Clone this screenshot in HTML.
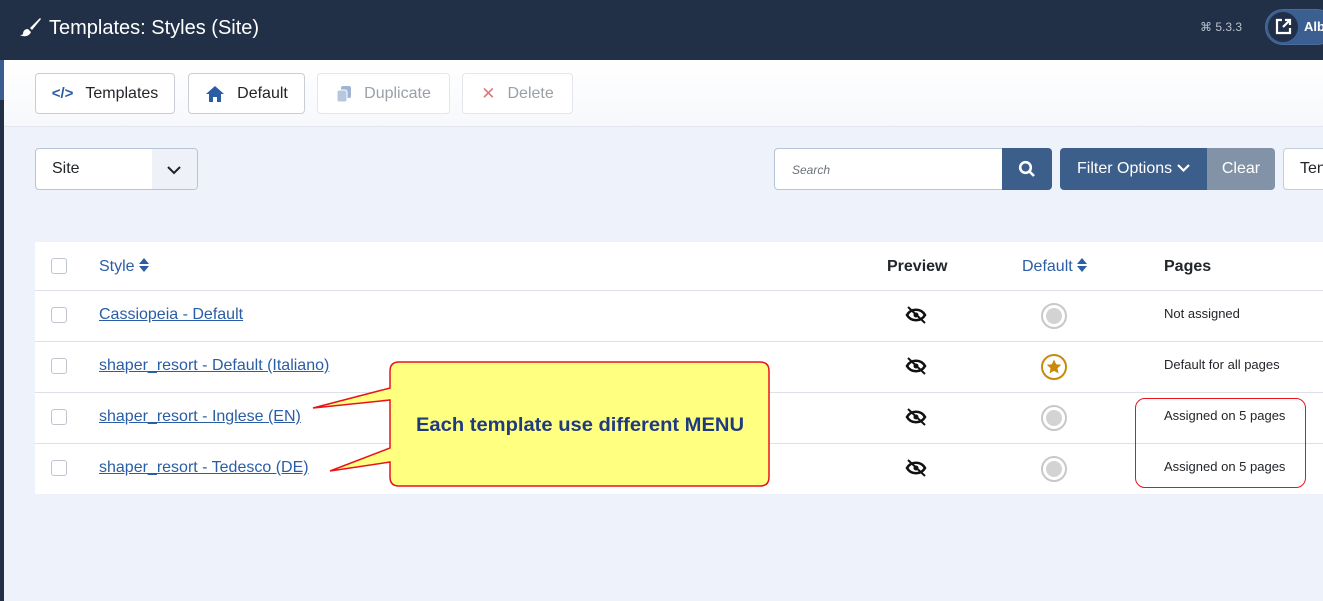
<!DOCTYPE html>
<html><head><meta charset="utf-8"><style>
*{box-sizing:border-box;margin:0;padding:0}
body{width:1323px;height:601px;overflow:hidden;background:#eef2fa;font-family:"Liberation Sans",sans-serif;position:relative;color:#22262a}
.abs{position:absolute}
.hdr{left:0;top:0;width:1323px;height:60px;background:#212f47}
.tb{left:0;top:60px;width:1323px;height:67px;background:linear-gradient(#fff,#f6f8fb);border-bottom:1px solid #e2e7f0}
.btn{position:absolute;top:73px;height:41px;border:1px solid #c9ced6;border-radius:4px;background:#fff;font-size:16px;display:flex;align-items:center;justify-content:center;gap:12px}
.btn.dis{border-color:#e3e6ea;color:#9aa0a8}
.row{position:absolute;left:35px;width:1288px;border-top:1px solid #dde1e7}
.cb{position:absolute;left:51px;width:16px;height:16px;border:1px solid #bfc5cd;border-radius:3px;background:#fff}
.lnk{position:absolute;left:99px;color:#2a5da6;text-decoration:underline;font-size:16px}
.pg{position:absolute;left:1164px;font-size:13px;color:#22262a}
.rad{position:absolute;left:1041px;width:26px;height:26px;border-radius:50%;border:2px solid #c8c8c8;background:#fff}
.rad::after{content:"";position:absolute;left:3px;top:3px;width:16px;height:16px;border-radius:50%;background:#d3d3d3}
.eye{position:absolute;left:905px}
.sort{display:inline-block;vertical-align:-1px}
</style></head><body>
<div class="abs hdr"></div>
<div class="abs tb"></div>
<div class="abs" style="left:0;top:60px;width:4px;height:541px;background:#212f47"></div>
<div class="abs" style="left:0;top:60px;width:4px;height:40px;background:#3a5c8f"></div>
<svg class="abs" style="left:18px;top:17px" width="24" height="20" viewBox="0 0 24 20"><path d="M22 1 L12 11 L14 13 L23 2 Z" fill="#fff"/><path d="M10 12 C6 12 5 15 5 17 C4 18 3 18 2 18 C5 20 11 20 13 15 Z" fill="#fff"/></svg>
<div class="abs" style="left:49px;top:17px;color:#fff;font-size:20px">Templates: Styles (Site)</div>
<div class="abs" style="left:1200px;top:20px;color:#b8c0cc;font-size:12px">⌘ 5.3.3</div>
<div class="abs" style="left:1265px;top:9px;width:70px;height:36px;border-radius:18px;background:#3b5f90;border:1px solid #4a6c9c"></div>
<div class="abs" style="left:1268px;top:12px;width:30px;height:30px;border-radius:50%;background:#212f47"></div>
<svg class="abs" style="left:1274px;top:18px" width="18" height="18" viewBox="0 0 18 18" fill="none" stroke="#fff" stroke-width="2.2"><path d="M8 2H3v13h13v-5"/><path d="M9 9 16 2M11 2h5v5"/></svg>
<div class="abs" style="left:1304px;top:19px;color:#fff;font-size:13px;font-weight:bold">Alb</div>

<div class="btn" style="left:35px;width:140px"><span style="color:#2a5da6;font-weight:bold;font-size:15px">&lt;/&gt;</span>Templates</div>
<div class="btn" style="left:188px;width:117px"><svg width="20" height="18" viewBox="0 0 20 18"><path d="M10 1 L1 9 H4 V17 H8 V12 H12 V17 H16 V9 H19 Z" fill="#2a5da6"/></svg>Default</div>
<div class="btn dis" style="left:317px;width:133px"><svg width="16" height="18" viewBox="0 0 16 18"><rect x="5" y="1" width="10" height="12" rx="2" fill="#9fb3d3"/><rect x="1" y="5" width="10" height="12" rx="2" fill="#b7c7e0" stroke="#fff"/></svg>Duplicate</div>
<div class="btn dis" style="left:462px;width:111px"><span style="color:#e07a7a;font-size:17px">✕</span>Delete</div>

<div class="abs" style="left:35px;top:148px;width:163px;height:42px;border:1px solid #b7c4d6;border-radius:4px;background:#fff;overflow:hidden">
<div class="abs" style="left:116px;top:0;width:47px;height:42px;background:#eef2f8"></div>
<div class="abs" style="left:16px;top:11px;font-size:16px">Site</div>
<svg class="abs" style="left:130px;top:15px" width="16" height="12" viewBox="0 0 16 12"><path d="M2 3l6 6 6-6" fill="none" stroke="#222" stroke-width="2"/></svg>
</div>
<div class="abs" style="left:774px;top:148px;width:230px;height:42px;border:1px solid #b7c4d6;border-radius:4px 0 0 4px;background:#fff"><span style="position:absolute;left:17px;top:14px;font-size:12px;font-style:italic;color:#6b7178">Search</span></div>
<div class="abs" style="left:1002px;top:148px;width:50px;height:42px;background:#3c5e8b;border-radius:0 4px 4px 0"></div>
<svg class="abs" style="left:1018px;top:160px" width="18" height="18" viewBox="0 0 18 18" fill="none" stroke="#fff" stroke-width="2.6"><circle cx="7.5" cy="7.5" r="5.3"/><path d="M11.5 11.5 16 16"/></svg>
<div class="abs" style="left:1060px;top:148px;width:148px;height:42px;background:#3c5e8b;border-radius:4px 0 0 4px;color:#fff;font-size:16px;line-height:42px;padding-left:17px">Filter Options <svg width="13" height="10" viewBox="0 0 13 10"><path d="M1 2l5.5 5.5L12 2" fill="none" stroke="#fff" stroke-width="2.2"/></svg></div>
<div class="abs" style="left:1207px;top:148px;width:68px;height:42px;background:#8393a7;border-radius:0 4px 4px 0;color:#fff;font-size:16px;line-height:42px;text-align:center">Clear</div>
<div class="abs" style="left:1283px;top:148px;width:60px;height:42px;background:#fff;border:1px solid #c4cdd9;border-radius:4px;font-size:16px;line-height:40px;padding-left:16px">Ten</div>

<div class="abs" style="left:35px;top:242px;width:1288px;height:252px;background:#fff"></div>
<div class="cb" style="top:258px"></div>
<div class="abs" style="left:99px;top:258px;color:#2a5da6;font-size:16px">Style <svg class="sort" width="10" height="14" viewBox="0 0 10 14"><path d="M5 0 10 6H0Z M5 14 0 8H10Z" fill="#2a5da6"/></svg></div>
<div class="abs" style="left:887px;top:258px;font-size:16px;font-weight:bold">Preview</div>
<div class="abs" style="left:1022px;top:258px;color:#2a5da6;font-size:16px">Default <svg class="sort" width="10" height="14" viewBox="0 0 10 14"><path d="M5 0 10 6H0Z M5 14 0 8H10Z" fill="#2a5da6"/></svg></div>
<div class="abs" style="left:1164px;top:258px;font-size:16px;font-weight:bold">Pages</div>

<div class="row" style="top:290px"></div>
<div class="row" style="top:341px"></div>
<div class="row" style="top:392px"></div>
<div class="row" style="top:443px"></div>

<div class="cb" style="top:307px"></div><div class="lnk" style="top:306px">Cassiopeia - Default</div>
<div class="cb" style="top:358px"></div><div class="lnk" style="top:357px">shaper_resort - Default (Italiano)</div>
<div class="cb" style="top:409px"></div><div class="lnk" style="top:408px">shaper_resort - Inglese (EN)</div>
<div class="cb" style="top:460px"></div><div class="lnk" style="top:459px">shaper_resort - Tedesco (DE)</div>

<svg class="eye" style="top:306px" width="22" height="18" viewBox="0 0 22 18"><path d="M2 9 C6 2 16 2 20 9 C16 16 6 16 2 9Z" fill="none" stroke="#111" stroke-width="2.6"/><circle cx="11" cy="9" r="2.5" fill="#111"/><path d="M3 1 L20 17" stroke="#111" stroke-width="2"/></svg>
<svg class="eye" style="top:357px" width="22" height="18" viewBox="0 0 22 18"><path d="M2 9 C6 2 16 2 20 9 C16 16 6 16 2 9Z" fill="none" stroke="#111" stroke-width="2.6"/><circle cx="11" cy="9" r="2.5" fill="#111"/><path d="M3 1 L20 17" stroke="#111" stroke-width="2"/></svg>
<svg class="eye" style="top:408px" width="22" height="18" viewBox="0 0 22 18"><path d="M2 9 C6 2 16 2 20 9 C16 16 6 16 2 9Z" fill="none" stroke="#111" stroke-width="2.6"/><circle cx="11" cy="9" r="2.5" fill="#111"/><path d="M3 1 L20 17" stroke="#111" stroke-width="2"/></svg>
<svg class="eye" style="top:459px" width="22" height="18" viewBox="0 0 22 18"><path d="M2 9 C6 2 16 2 20 9 C16 16 6 16 2 9Z" fill="none" stroke="#111" stroke-width="2.6"/><circle cx="11" cy="9" r="2.5" fill="#111"/><path d="M3 1 L20 17" stroke="#111" stroke-width="2"/></svg>

<div class="rad" style="top:303px"></div>
<svg class="abs" style="left:1041px;top:354px" width="26" height="26" viewBox="0 0 26 26"><circle cx="13" cy="13" r="12" fill="#fff" stroke="#c98a0c" stroke-width="2"/><path d="M13 5.5l2.2 4.7 5.1.6-3.8 3.5 1 5.1L13 16.9l-4.5 2.5 1-5.1-3.8-3.5 5.1-.6z" fill="#c98a0c"/></svg>
<div class="rad" style="top:405px"></div>
<div class="rad" style="top:456px"></div>

<div class="pg" style="top:306px">Not assigned</div>
<div class="pg" style="top:357px">Default for all pages</div>
<div class="pg" style="top:408px">Assigned on 5 pages</div>
<div class="pg" style="top:459px">Assigned on 5 pages</div>

<div class="abs" style="left:1135px;top:398px;width:171px;height:90px;border:1.5px solid #e8141c;border-radius:10px"></div>

<svg class="abs" style="left:0;top:0" width="1323" height="601">
<path d="M399 362 H760 Q769 362 769 371 V477 Q769 486 760 486 H399 Q390 486 390 477 V462 L330 471 L390 448 V400 L313 408 L390 388 V371 Q390 362 399 362 Z" fill="#ffff80" stroke="#e8141c" stroke-width="1.5"/>
<text x="580" y="431" text-anchor="middle" font-family="Liberation Sans, sans-serif" font-size="19" font-weight="bold" fill="#1f3a80" textLength="328" lengthAdjust="spacingAndGlyphs">Each template use different MENU</text>
</svg>
</body></html>
